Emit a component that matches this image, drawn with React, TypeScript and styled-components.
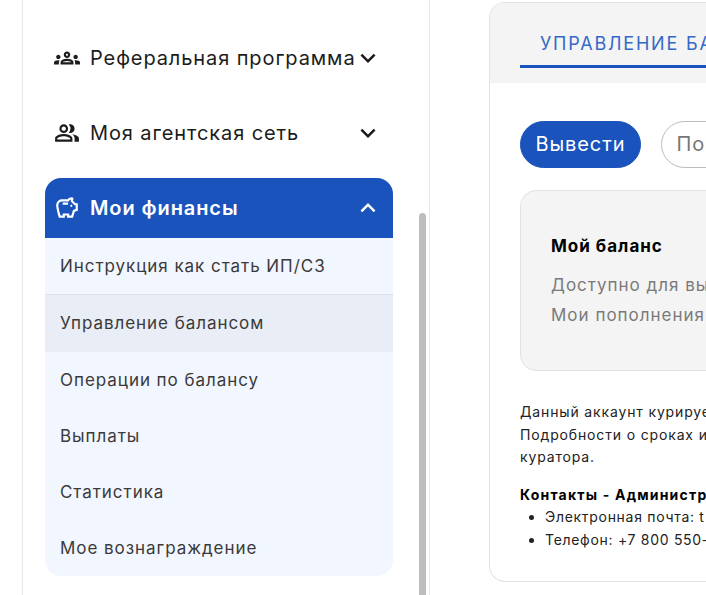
import React from 'react';
import styled, { createGlobalStyle } from 'styled-components';
import {
	MdExpandLess,
	MdExpandMore,
	MdOutlineGroups,
	MdOutlinePeopleAlt,
	MdOutlineSavings,
} from 'react-icons/md';

const GlobalStyle = createGlobalStyle`
	html, body {
		margin: 0;
		height: 100%;
		overflow: hidden;
		background: #fff;
	}
	body {
		font-family: Inter, "Noto Sans", sans-serif;
		color: #222;
	}
	* {
		box-sizing: border-box;
	}
`;

const Page = styled.div`
	display: flex;
	width: 706px;
	height: 595px;
	overflow: hidden;
	padding-left: 22px;
`;
const Sidebar = styled.aside`
	position: relative;
	flex: none;
	width: 408px;
	height: 595px;
	padding: 28px 36px 0 22px;
	border-left: 1px solid #e9e9e9;
	border-right: 1px solid #e9e9e9;
`;
const Scrollbar = styled.div`
	position: absolute;
	top: 213px;
	right: 3px;
	bottom: 0;
	width: 7px;
	border-radius: 4px 4px 0 0;
	background: #bdbdbd;
`;
const Nav = styled.nav`
	display: flex;
	flex-direction: column;
	gap: 15px;
`;
const NavRow = styled.div<{ $active?: boolean }>`
	display: flex;
	align-items: center;
	height: 60px;
	padding: 0 10px 0 9px;
	font-size: 20px;
	font-weight: ${(p) => (p.$active ? 600 : 400)};
	color: ${(p) => (p.$active ? '#fff' : '#1c1c1c')};
	background: ${(p) => (p.$active ? '#1a53bb' : 'transparent')};
	border-radius: ${(p) => (p.$active ? '16px 16px 0 0' : '0')};
	white-space: nowrap;
`;
const NavIcon = styled.span`
	display: flex;
	flex: none;
	width: 27px;
	margin-right: 9px;
	font-size: 26px;
`;
const NavLabel = styled.span`
	flex: 1;
	min-width: 0;
	letter-spacing: 0.9px;
`;
const Chevron = styled.span`
	display: flex;
	flex: none;
	margin-left: -4px;
	font-size: 30px;
`;
const SubList = styled.ul`
	margin: 0;
	padding: 0;
	list-style: none;
	background: #f2f6ff;
	border-radius: 0 0 16px 16px;
	overflow: hidden;
`;
const SubItem = styled.li<{ $current?: boolean; $divided?: boolean }>`
	display: flex;
	align-items: center;
	height: ${(p) => (p.$divided ? '57px' : p.$current ? '56.5px' : '56.1px')};
	padding-left: 15px;
	font-size: 17px;
	letter-spacing: 0.95px;
	color: #3a3a3a;
	background: ${(p) => (p.$current ? '#e9edf5' : 'transparent')};
	border-bottom: ${(p) => (p.$divided ? '1px solid #dde1ea' : 'none')};
`;

const Main = styled.main`
	flex: none;
	width: 260px;
	margin: 2px 0 13px 59px;
	border: 1px solid #e2e2e2;
	border-right: none;
	border-radius: 16px 0 0 16px;
	overflow: hidden;
`;
const TabBar = styled.div`
	display: flex;
	height: 80px;
	padding-left: 30px;
	background: #f4f4f4;
	white-space: nowrap;
`;
const Tab = styled.div`
	height: 65px;
	padding: 30px 20px 0;
	font-size: 18px;
	line-height: 22px;
	letter-spacing: 1.8px;
	color: #3568c7;
	border-bottom: 3px solid #1a53bb;
`;
const Body = styled.div`
	padding: 38px 0 0 30px;
	white-space: nowrap;
`;
const Actions = styled.div`
	display: flex;
	gap: 20px;
`;
const PillButton = styled.button<{ $primary?: boolean }>`
	flex: none;
	height: 47px;
	padding: 0 14.5px 1px;
	font-family: inherit;
	font-size: 20px;
	letter-spacing: 0.9px;
	border-radius: 24px;
	border: 1px solid ${(p) => (p.$primary ? '#1a53bb' : '#bbb')};
	color: ${(p) => (p.$primary ? '#fff' : '#777')};
	background: ${(p) => (p.$primary ? '#1a53bb' : '#fff')};
`;
const BalanceCard = styled.section`
	width: 300px;
	height: 181px;
	margin-top: 22px;
	padding: 45px 30px 0;
	background: #f4f4f4;
	border: 1px solid #e2e2e2;
	border-radius: 16px;
`;
const BalanceTitle = styled.h3`
	margin: 0 0 13px;
	font-size: 17px;
	line-height: 21px;
	font-weight: 700;
	letter-spacing: 1px;
	color: #000;
`;
const BalanceLine = styled.div`
	font-size: 17px;
	line-height: 30px;
	letter-spacing: 1px;
	color: #7a7a7a;
`;
const Note = styled.p`
	margin: 30px 0 0;
	font-size: 14px;
	line-height: 22.5px;
	letter-spacing: 0.85px;
	color: #222;
`;
const ContactTitle = styled.div`
	margin-top: 16px;
	font-size: 14px;
	line-height: 20px;
	font-weight: 700;
	letter-spacing: 1.2px;
	color: #000;
`;
const ContactList = styled.ul`
	margin: 0;
	padding-left: 25px;
	font-size: 14px;
	line-height: 23px;
	letter-spacing: 0.7px;
	color: #222;
`;

const App: React.FC = () => (
	<>
		<GlobalStyle />
		<Page>
			<Sidebar>
				<Nav>
					<NavRow>
						<NavIcon>
							<MdOutlineGroups />
						</NavIcon>
						<NavLabel>Реферальная программа</NavLabel>
						<Chevron>
							<MdExpandMore />
						</Chevron>
					</NavRow>
					<NavRow>
						<NavIcon>
							<MdOutlinePeopleAlt />
						</NavIcon>
						<NavLabel>Моя агентская сеть</NavLabel>
						<Chevron>
							<MdExpandMore />
						</Chevron>
					</NavRow>
					<div>
						<NavRow $active>
							<NavIcon>
								<MdOutlineSavings />
							</NavIcon>
							<NavLabel>Мои финансы</NavLabel>
							<Chevron>
								<MdExpandLess />
							</Chevron>
						</NavRow>
						<SubList>
							<SubItem $divided>Инструкция как стать ИП/СЗ</SubItem>
							<SubItem $current>Управление балансом</SubItem>
							<SubItem>Операции по балансу</SubItem>
							<SubItem>Выплаты</SubItem>
							<SubItem>Статистика</SubItem>
							<SubItem>Мое вознаграждение</SubItem>
						</SubList>
					</div>
				</Nav>
				<Scrollbar />
			</Sidebar>
			<Main>
				<TabBar>
					<Tab>УПРАВЛЕНИЕ БАЛАНСОМ</Tab>
				</TabBar>
				<Body>
					<Actions>
						<PillButton $primary>Вывести</PillButton>
						<PillButton>Пополнить</PillButton>
					</Actions>
					<BalanceCard>
						<BalanceTitle>Мой баланс</BalanceTitle>
						<BalanceLine>Доступно для вывода</BalanceLine>
						<BalanceLine>Мои пополнения</BalanceLine>
					</BalanceCard>
					<Note>
						Данный аккаунт курируется
						<br />
						Подробности о сроках и
						<br />
						куратора.
					</Note>
					<ContactTitle>Контакты - Администратор</ContactTitle>
					<ContactList>
						<li>Электронная почта: t</li>
						<li>Телефон: +7 800 550-</li>
					</ContactList>
				</Body>
			</Main>
		</Page>
	</>
);

export default App;
